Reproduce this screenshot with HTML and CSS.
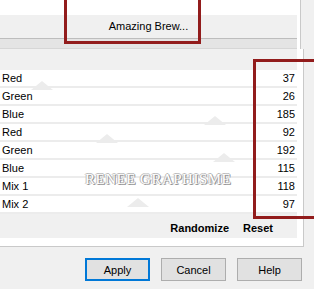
FILE: index.html
```html
<!DOCTYPE html>
<html lang="en">
<head>
    <meta charset="UTF-8">
    <meta name="viewport" content="width=device-width, initial-scale=1.0">
    <title>Amazing Brew</title>
    <link rel="stylesheet" href="styles.css">
</head>
<body>
    <div class="dialog">
        <!-- Preview and preset bar -->
        <div class="preview">
            <div class="preview-top"></div>
            <div class="preset-bar">Amazing Brew...</div>
            <div class="scrollbar"></div>
        </div>

        <!-- Colour values -->
        <div class="panel">
            <div class="panel-inner">
                <div class="list">
                    <div class="list-head"></div>
                    <div class="row"><span>Red</span><span>37</span></div>
                    <div class="row"><span>Green</span><span>26</span></div>
                    <div class="row"><span>Blue</span><span>185</span></div>
                    <div class="row"><span>Red</span><span>92</span></div>
                    <div class="row"><span>Green</span><span>192</span></div>
                    <div class="row"><span>Blue</span><span>115</span></div>
                    <div class="row"><span>Mix 1</span><span>118</span></div>
                    <div class="row"><span>Mix 2</span><span>97</span></div>

                    <span class="tri tri-1"></span>
                    <span class="tri tri-2"></span>
                    <span class="tri tri-3"></span>
                    <span class="tri tri-4"></span>
                    <span class="tri tri-5"></span>
                    <div class="watermark">RENEE GRAPHISME</div>
                </div>
                <div class="actions">
                    <span>Randomize</span>
                    <span>Reset</span>
                </div>
            </div>
        </div>

        <div class="buttons">
            <button class="btn btn-default">Apply</button>
            <button class="btn">Cancel</button>
            <button class="btn">Help</button>
        </div>

        <!-- Highlight frames -->
        <div class="mark mark-preset"></div>
        <div class="mark mark-values"></div>
    </div>
</body>
</html>
```

FILE: styles.css
```css
body { margin: 0; padding: 0; background-color: #f0f0f0; font-family: "Liberation Sans", Arial, sans-serif; font-size: 11px; color: #000; }
.dialog { position: relative; width: 314px; height: 289px; overflow: hidden; }

.preview { width: 297px; padding-right: 3px; border-right: 1px solid #c9c9c9; background: #fff; }
.preview-top { height: 15px; }
.preset-bar { height: 23px; line-height: 23px; text-align: center; background: #f0f0f0; }
.scrollbar { height: 9px; background: #e4e4e4; border-top: 1px solid #bdbdbd; border-bottom: 1px solid #d6d6d6; }

.panel { width: 297px; padding-right: 6px; padding-bottom: 8px; background: #fff; border-right: 1px solid #c9c9c9; border-bottom: 1px solid #c9c9c9; }
.panel-inner { background: #f0f0f0; padding-top: 11px; }
.list { position: relative; }
.list-head { height: 10px; background: #f0f0f0; }
.list::before { content: ""; position: absolute; left: 0; right: 0; top: 10px; bottom: 0; background: #fff; z-index: 0; }
.row { position: relative; z-index: 2; display: flex; justify-content: space-between; height: 16px; line-height: 16px; padding: 0 2px; border-bottom: 2px solid #ececec; }

.tri { position: absolute; z-index: 1; width: 0; height: 0; border-left: 11px solid transparent; border-right: 11px solid transparent; border-bottom: 9px solid #ececec; }
.tri-1 { left: 31px; top: 21px; }
.tri-2 { left: 204px; top: 56px; }
.tri-3 { left: 96px; top: 74px; }
.tri-4 { left: 213px; top: 93px; }
.tri-5 { left: 127px; top: 138px; }

.watermark { position: absolute; z-index: 3; left: 85px; top: 111px; font-family: "Liberation Serif", "Times New Roman", serif; font-size: 15px; letter-spacing: 0.5px; color: #fff; text-shadow: 1px 1px 0 #959595, -1px 0 0 #bcbcbc, 0 -1px 0 #bcbcbc, 1px 0 0 #a8a8a8; }

.actions { display: flex; justify-content: flex-end; gap: 14px; height: 24px; box-sizing: border-box; padding-top: 6px; padding-right: 24px; line-height: 16px; font-weight: bold; }

.buttons { display: flex; gap: 11px; margin-top: 11px; padding-left: 85px; }
.btn { width: 65px; height: 23px; padding: 0; background: #e1e1e1; border: 1px solid #adadad; font-family: "Liberation Sans", Arial, sans-serif; font-size: 11px; color: #000; }
.btn-default { border: 2px solid #0078d7; }

.mark { position: absolute; z-index: 5; border: 3px solid #921c1c; box-sizing: border-box; }
.mark-preset { left: 64px; top: -6px; width: 137px; height: 50px; }
.mark-values { left: 253px; top: 59px; width: 70px; height: 160px; }
```
